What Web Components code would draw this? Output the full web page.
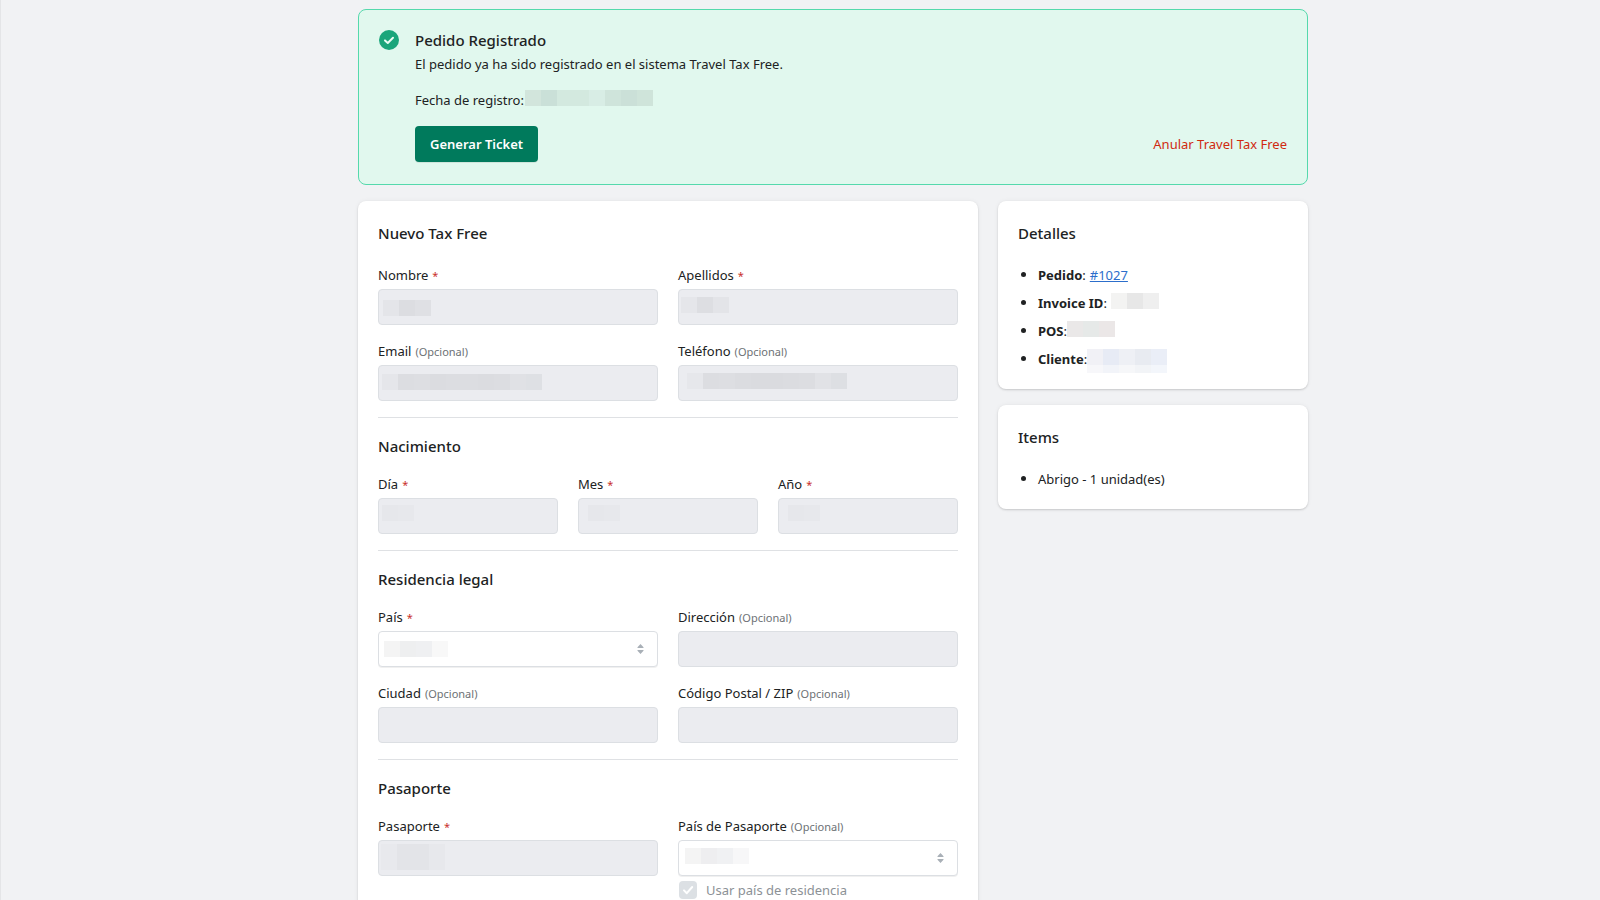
<!DOCTYPE html>
<html lang="es">
<head>
<meta charset="utf-8">
<title>Travel Tax Free</title>
<style>
  html { background: #f1f2f4; scrollbar-width: none; }
  body { margin: 0; font: 400 13px/20px "Noto Sans", "Open Sans", sans-serif; color: #202223; }
</style>
</head>
<body>
<tax-page>
  <status-banner slot="banner" heading="Pedido Registrado">
    <span slot="text">El pedido ya ha sido registrado en el sistema Travel Tax Free.</span>
    <span slot="date">Fecha de registro:</span>
    <masked-value slot="date" tones="#d2e5dc #cae0d8 #d3e9df #d3e9df #d8ede5 #cfe4db #cbe0d8 #cfe4da"></masked-value>
  </status-banner>

  <surface-card heading="Nuevo Tax Free">
    <field-row>
      <form-field label="Nombre" required><masked-value x="5" y="11" tones="#e4e5e9 #dcdde1 #dfe0e4"></masked-value></form-field>
      <form-field label="Apellidos" required><masked-value x="3" y="8" tones="#e5e6ea #dddee2 #e3e4e8"></masked-value></form-field>
    </field-row>
    <field-row>
      <form-field label="Email" optional><masked-value x="4" y="9" tones="#e5e6ea #dcdde1 #dddee2 #dbdce0 #dcdde1 #dcdde1 #dbdce0 #dcdde1 #e0e1e5 #dee0e4"></masked-value></form-field>
      <form-field label="Teléfono" optional><masked-value x="9" y="8" tones="#e6e7eb #dcdde1 #dddee2 #dbdce0 #dadbdf #dadbdf #dbdce0 #dcdde1 #e1e2e6 #dddfe3"></masked-value></form-field>
    </field-row>
    <form-section heading="Nacimiento">
      <field-row>
        <form-field label="Día" required><masked-value x="4" y="7" tones="#e6e7eb #e7e8ec"></masked-value></form-field>
        <form-field label="Mes" required><masked-value x="10" y="7" tones="#e6e7eb #e7e8ec"></masked-value></form-field>
        <form-field label="Año" required><masked-value x="10" y="7" tones="#e6e7eb #e7e8ec"></masked-value></form-field>
      </field-row>
    </form-section>
    <form-section heading="Residencia legal">
      <field-row>
        <form-field label="País" kind="select" required><masked-value x="6" y="10" tones="#f4f4f4 #eeeff0 #eff0f2 #f8f8f8"></masked-value></form-field>
        <form-field label="Dirección" optional></form-field>
      </field-row>
      <field-row>
        <form-field label="Ciudad" optional></form-field>
        <form-field label="Código Postal / ZIP" optional></form-field>
      </field-row>
    </form-section>
    <form-section heading="Pasaporte">
      <field-row>
        <form-field label="Pasaporte" required><masked-value x="3" y="4" tall tones="#e8e9ed #e3e4e8 #e3e4e8 #e7e8ec"></masked-value></form-field>
        <form-field label="País de Pasaporte" kind="select" optional>
          <masked-value x="7" y="8" tones="#f4f4f4 #eeeef0 #f0f1f3 #f7f7f8"></masked-value>
          <check-option slot="after" label="Usar país de residencia"></check-option>
        </form-field>
      </field-row>
    </form-section>
  </surface-card>

  <surface-card slot="aside" heading="Detalles">
    <detail-list>
      <detail-item term="Pedido"><text-link href="#1027">#1027</text-link></detail-item>
      <detail-item term="Invoice ID"><masked-value tones="#f3f3f2 #e7e7e7 #efefef"></masked-value></detail-item>
      <detail-item term="POS" tight><masked-value tones="#eae8e8 #e6e9e8 #ebe7e7"></masked-value></detail-item>
      <detail-item term="Cliente" tight><masked-value fade tones="#f1f1f6 #e7ebf5 #eef0f5 #e8ebf1 #eaeef7"></masked-value></detail-item>
    </detail-list>
  </surface-card>
  <surface-card slot="aside" heading="Items">
    <detail-list>
      <detail-item>Abrigo - 1 unidad(es)</detail-item>
    </detail-list>
  </surface-card>
</tax-page>

<script>
const define = (name, render) => customElements.define(name, class extends HTMLElement {
  constructor() {
    super();
    this.attachShadow({ mode: 'open' });
  }
  connectedCallback() {
    const t = document.createElement('template');
    t.innerHTML = '<style>*{box-sizing:border-box}:host{box-sizing:border-box}</style>' + render(this);
    this.shadowRoot.replaceChildren(t.content.cloneNode(true));
  }
});

define('tax-page', () => `
  <style>
    :host { display: block; min-height: 100vh; padding: 9px 0 20px 65px; border-left: 1px solid #e4e5e7; background: #f1f2f4; }
    .wrap { max-width: 950px; margin: 0 auto; display: grid; gap: 16px; }
    .columns { display: grid; grid-template-columns: minmax(0, 2fr) minmax(0, 1fr); column-gap: 20px; align-items: start; }
    aside { display: grid; gap: 16px; }
  </style>
  <div class="wrap">
    <slot name="banner"></slot>
    <div class="columns"><main><slot></slot></main><aside><slot name="aside"></slot></aside></div>
  </div>`);

define('status-banner', el => `
  <style>
    :host { display: flex; gap: 16px; padding: 18px 20px 22px; border: 1px solid #55d9ac; border-radius: 8px; background: #e1f8ee; }
    svg { flex: none; margin-top: 2px; }
    .body { flex: 1; }
    h2 { margin: 0 0 2px; font-size: 15px; line-height: 24px; font-weight: 500; }
    p { margin: 0 0 16px; }
    .date { display: flex; gap: 1px; height: 20px; }
    .actions { display: flex; justify-content: space-between; align-items: center; }
    button { font: inherit; border: 0; cursor: pointer; }
    .primary { min-width: 123px; height: 36px; padding: 0 15px; border-radius: 4px; background: #007a5c; color: #fff; font-weight: 600; box-shadow: 0 1px 0 rgba(0,0,0,.08); }
    .plain { padding: 0; background: none; color: #d02a10; }
  </style>
  <svg width="20" height="20" viewBox="0 0 20 20" aria-hidden="true"><circle cx="10" cy="10" r="10" fill="#1aa57a"/><path d="M6 10.4l2.8 2.6 5.2-5.2" fill="none" stroke="#e9fbf3" stroke-width="2" stroke-linecap="round" stroke-linejoin="round"/></svg>
  <div class="body">
    <h2>${el.getAttribute('heading')}</h2>
    <p><slot name="text"></slot></p>
    <p class="date"><slot name="date"></slot></p>
    <div class="actions"><button class="primary" type="button">Generar Ticket</button><button class="plain" type="button">Anular Travel Tax Free</button></div>
  </div>`);

define('surface-card', el => `
  <style>
    :host { display: block; padding: 20px; border-radius: 8px; background: #fff; box-shadow: 0 0 5px rgba(23,24,24,.05), 0 1px 2px rgba(0,0,0,.15); }
    h2 { margin: 0 0 20px; font-size: 15px; line-height: 24px; font-weight: 500; }
    .content { display: grid; gap: 16px; }
  </style>
  <h2>${el.getAttribute('heading')}</h2>
  <div class="content"><slot></slot></div>`);

define('form-section', el => `
  <style>
    :host { display: grid; gap: 16px; padding-top: 16px; border-top: 1px solid #dfe1e4; }
    h3 { margin: 0; font-size: 15px; line-height: 24px; font-weight: 500; }
  </style>
  <h3>${el.getAttribute('heading')}</h3>
  <slot></slot>`);

define('field-row', () => `
  <style>
    :host { display: grid; grid-auto-flow: column; grid-auto-columns: minmax(0, 1fr); column-gap: 20px; align-items: start; }
  </style>
  <slot></slot>`);

define('form-field', el => {
  const required = el.hasAttribute('required');
  const select = el.getAttribute('kind') === 'select';
  const note = required ? '<span class="star">*</span>' : '<small>(Opcional)</small>';
  const control = select
    ? `<select id="control" disabled><option></option></select>
       <svg width="7" height="10" viewBox="0 0 7 10" aria-hidden="true"><path d="M3.5 0L6.5 3.2V4h-6v-.8zM3.5 10L.5 6.8V6h6v.8z" fill="#a9b0b7"/></svg>`
    : '<input id="control" type="text" disabled>';
  return `
  <style>
    :host { display: block; }
    label { display: flex; align-items: baseline; gap: 4px; height: 20px; margin-bottom: 4px; white-space: nowrap; }
    .star { font-size: 11px; color: #c9302c; }
    small { font-size: 11px; color: #6d7175; }
    .control { position: relative; display: flex; }
    input, select { width: 100%; height: 36px; margin: 0; padding: 0 12px; font: inherit; color: inherit; border: 1px solid #dcdfe3; border-radius: 4px; background: #ebecf0; opacity: 1; appearance: none; }
    select { background: #fff; box-shadow: 0 1px 0 rgba(0,0,0,.06); }
    svg { position: absolute; right: 14px; top: 13px; }
  </style>
  <label for="control"><span>${el.getAttribute('label')}</span>${note}</label>
  <div class="control">${control}<slot></slot></div>
  <slot name="after"></slot>`;
});

define('check-option', el => `
  <style>
    :host { display: block; padding-top: 4px; }
    label { display: flex; align-items: center; gap: 9px; height: 20px; padding-left: 1px; color: #8c9196; }
    .box { position: relative; display: flex; }
    input { appearance: none; width: 18px; height: 18px; margin: 0; border-radius: 4px; background: #dce0e4; }
    svg { position: absolute; inset: 0; }
  </style>
  <label><span class="box"><input type="checkbox" checked disabled><svg width="18" height="18" viewBox="0 0 18 18" aria-hidden="true"><path d="M5 9.4l2.8 2.8L13.2 6" fill="none" stroke="#fff" stroke-width="2" stroke-linecap="round" stroke-linejoin="round"/></svg></span>${el.getAttribute('label')}</label>`);

define('detail-list', () => `
  <style>
    :host { display: block; }
    div { display: grid; gap: 8px; padding-left: 20px; }
  </style>
  <div role="list"><slot></slot></div>`);

define('detail-item', el => {
  const term = el.getAttribute('term');
  el.setAttribute('role', 'listitem');
  return `
  <style>
    :host { position: relative; display: flex; gap: ${el.hasAttribute('tight') ? '0' : '4px'}; height: 20px; }
    :host::before { content: ""; position: absolute; left: -17px; top: 7px; width: 5px; height: 5px; border-radius: 50%; background: #202223; }
    b { font-weight: 700; }
  </style>
  ${term ? `<span><b>${term}</b>:</span>` : ''}<slot></slot>`;
});

define('text-link', el => `
  <style>
    :host { display: inline; }
    a { color: #2c6ecb; text-decoration: underline; }
  </style>
  <a href="${el.getAttribute('href')}"><slot></slot></a>`);

define('masked-value', el => {
  const tones = el.getAttribute('tones').split(' ');
  const floating = el.hasAttribute('x');
  return `
  <style>
    :host { display: flex; flex: none; height: ${el.hasAttribute('tall') ? 26 : el.hasAttribute('fade') ? 24 : 16}px;
      ${floating ? `position: absolute; left: ${el.getAttribute('x')}px; top: ${el.getAttribute('y')}px; pointer-events: none;` : ''} }
    i { width: 16px; ${el.hasAttribute('fade') ? 'box-shadow: inset 0 -8px rgba(255,255,255,.45);' : ''} }
  </style>
  ${tones.map(c => `<i style="background:${c}"></i>`).join('')}`;
});
</script>
</body>
</html>
